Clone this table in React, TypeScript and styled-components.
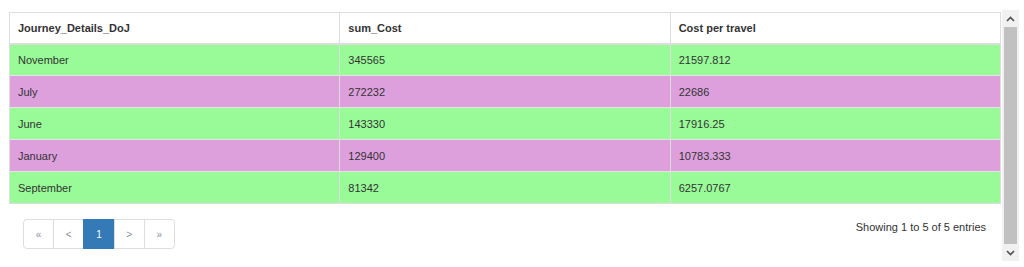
import React from "react";
import styled, { createGlobalStyle } from "styled-components";

const Global = createGlobalStyle`
  html, body { margin: 0; padding: 0; background: #fff; }
  body { font-family: "Liberation Sans", Arial, sans-serif; font-size: 11px; color: #333; }
  * { box-sizing: border-box; }
`;

const Page = styled.div`
  display: flex;
  padding: 10px 0 0 9px;
  height: 267px;
`;

const Panel = styled.div`
  width: 993px;
  height: 250px;
  padding-top: 2px;
  overflow: hidden;
  display: flex;
  flex-direction: column;
`;

const Table = styled.table`
  width: 992px;
  border-collapse: collapse;
  table-layout: fixed;
  border: 1px solid #ddd;
`;

const Th = styled.th`
  text-align: left;
  font-weight: bold;
  font-size: 11px;
  color: #333;
  height: 31px;
  padding: 0 8px;
  border-left: 1px solid #ddd;
  border-bottom: 2px solid #ddd;
  background: #fff;
`;

const Row = styled.tr<{ $bg: string }>`
  background: ${(p) => p.$bg};
`;

const Td = styled.td`
  height: 32px;
  padding: 0 8px;
  font-size: 11px;
  color: #333;
  border-left: 1px solid #ddd;
  border-top: 1px solid #e4e4e4;
`;

const Footer = styled.div`
  display: flex;
  justify-content: space-between;
  align-items: flex-start;
  padding: 15px 16px 0 14px;
`;

const Pager = styled.ul`
  display: flex;
  list-style: none;
  margin: 0;
  padding: 0;
`;

const PageBtn = styled.li<{ $active?: boolean }>`
  width: 31.2px;
  height: 30px;
  display: flex;
  align-items: center;
  justify-content: center;
  font-size: 10px;
  color: ${(p) => (p.$active ? "#fff" : "#8a8fa0")};
  background: ${(p) => (p.$active ? "#337ab7" : "#fff")};
  border: 1px solid ${(p) => (p.$active ? "#337ab7" : "#ddd")};
  margin-left: -1px;
  &:first-child {
    margin-left: 0;
    border-radius: 4px 0 0 4px;
  }
  &:last-child {
    border-radius: 0 4px 4px 0;
  }
`;

const Info = styled.div`
  font-size: 11px;
  color: #333;
  padding-top: 2px;
`;

const Scrollbar = styled.div`
  width: 17px;
  height: 251px;
  background: #f1f1f1;
  display: flex;
  flex-direction: column;
`;

const ScrollBtn = styled.div`
  height: 17px;
  display: flex;
  align-items: center;
  justify-content: center;
`;

const Thumb = styled.div`
  flex: 1;
  margin: 0 2px;
  background: #c1c1c1;
`;

const rows = [
  ["November", "345565", "21597.812"],
  ["July", "272232", "22686"],
  ["June", "143330", "17916.25"],
  ["January", "129400", "10783.333"],
  ["September", "81342", "6257.0767"],
];

const Chevron = ({ up }: { up?: boolean }) => (
  <svg width="9" height="6" viewBox="0 0 9 6">
    <path
      d={up ? "M1 5 L4.5 1.5 L8 5" : "M1 1 L4.5 4.5 L8 1"}
      fill="none"
      stroke="#505050"
      strokeWidth="1.6"
    />
  </svg>
);

export default function App() {
  return (
    <>
      <Global />
      <Page>
        <Panel>
          <Table>
            <thead>
              <tr>
                <Th>Journey_Details_DoJ</Th>
                <Th>sum_Cost</Th>
                <Th>Cost per travel</Th>
              </tr>
            </thead>
            <tbody>
              {rows.map((r, i) => (
                <Row key={r[0]} $bg={i % 2 === 0 ? "#98fb98" : "#dda0dd"}>
                  {r.map((c) => (
                    <Td key={c}>{c}</Td>
                  ))}
                </Row>
              ))}
            </tbody>
          </Table>
          <Footer>
            <Pager>
              <PageBtn>«</PageBtn>
              <PageBtn>&lt;</PageBtn>
              <PageBtn $active>1</PageBtn>
              <PageBtn>&gt;</PageBtn>
              <PageBtn>»</PageBtn>
            </Pager>
            <Info>Showing 1 to 5 of 5 entries</Info>
          </Footer>
        </Panel>
        <Scrollbar>
          <ScrollBtn>
            <Chevron up />
          </ScrollBtn>
          <Thumb />
          <ScrollBtn>
            <Chevron />
          </ScrollBtn>
        </Scrollbar>
      </Page>
    </>
  );
}
